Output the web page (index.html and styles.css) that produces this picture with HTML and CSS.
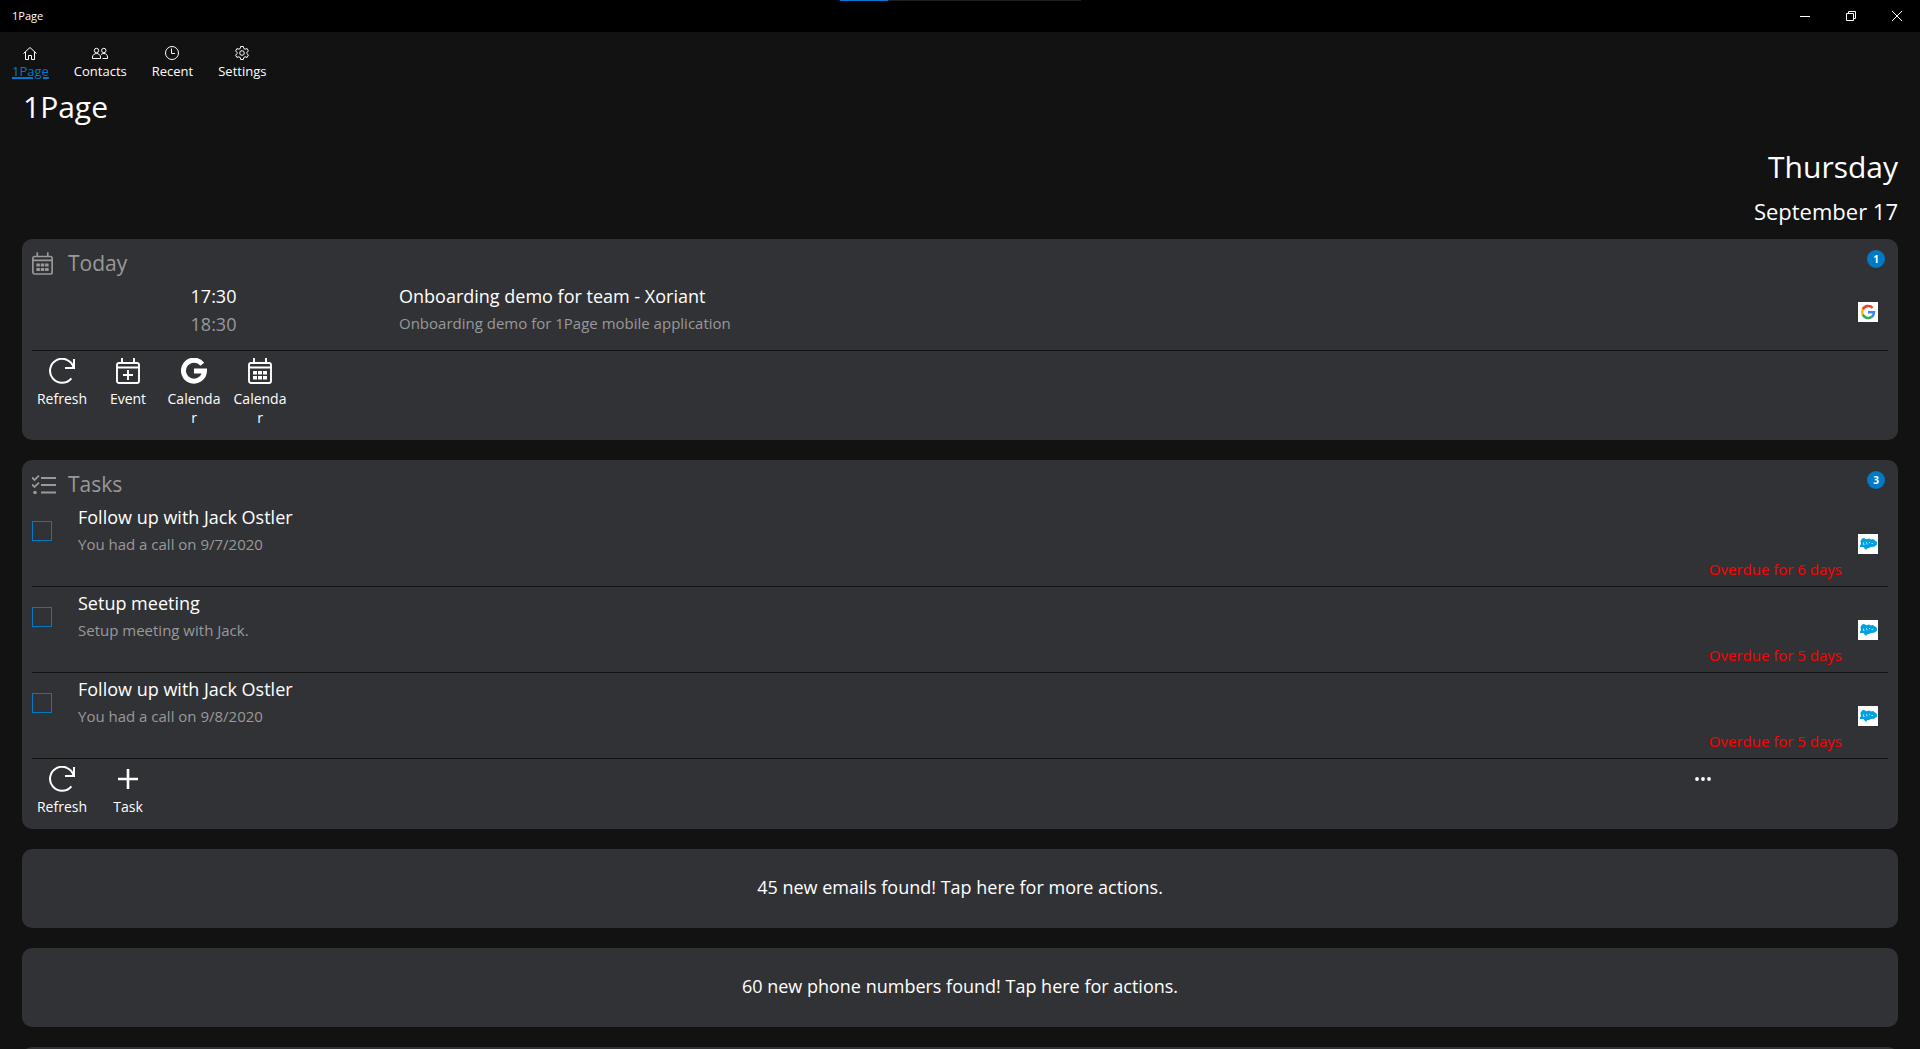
FILE: index.html
```html
<!DOCTYPE html>
<html lang="en">
<head>
<meta charset="utf-8">
<title>1Page</title>
<link rel="stylesheet" href="styles.css">
</head>
<body>
<svg class="defs" aria-hidden="true">
  <symbol id="refresh" viewBox="0 0 26 26"><path d="M22.4 20.3A12 12 0 1 1 24.6 9.6M25 1v9H16" fill="none" stroke="currentColor" stroke-width="2"/></symbol>
  <symbol id="calendar" viewBox="0 0 24 26"><path d="M3 5h18a2 2 0 0 1 2 2v16a2 2 0 0 1-2 2H3a2 2 0 0 1-2-2V7a2 2 0 0 1 2-2zM1 9.500h22M6 0v5M18 0v5" fill="none" stroke="currentColor" stroke-width="1.900"/><path d="M5 13h4v3.500H5zM10 13h4v3.500h-4zM15 13h4v3.500h-4zM5 18h4v3.500H5zM10 18h4v3.500h-4zM15 18h4v3.500h-4z" fill="currentColor"/></symbol>
  <symbol id="calendar-add" viewBox="0 0 24 26"><path d="M3 5h18a2 2 0 0 1 2 2v16a2 2 0 0 1-2 2H3a2 2 0 0 1-2-2V7a2 2 0 0 1 2-2zM1 9.500h22M6 0v5M18 0v5M12 12v10M7 17h10" fill="none" stroke="currentColor" stroke-width="1.900"/></symbol>
  <symbol id="google-mono" viewBox="0 0 26 26"><path d="M21.300 6.200A10.500 10.500 0 1 0 23.500 13H13" fill="none" stroke="currentColor" stroke-width="5"/></symbol>
  <symbol id="google" viewBox="0 0 20 20"><rect width="20" height="20" fill="#fff"/><g fill="none" stroke-width="2.600"><path d="M14.600 5.900A6 6 0 0 0 4.800 7.500" stroke="#ea4335"/><path d="M4.800 7.500a6 6 0 0 0 0 5.200" stroke="#fbbc05"/><path d="M4.800 12.700a6 6 0 0 0 9.500 1.700" stroke="#34a853"/><path d="M14 14.700a6 6 0 0 0 2-4.400H10" stroke="#4285f4"/></g></symbol>
  <symbol id="cloud" viewBox="0 0 20 20"><rect width="20" height="20" fill="#fff"/><path d="M2 11.500l1-1.500-.5-3L4 4.500 6 4l2.500 1.200L11 4.600l2 .8 2-.4 3.800 2.800.2 3-3 2-3 .2-2 1-2 .2L8.500 16 6.500 14.500l-1-1.500H2z" fill="#00a1e0"/><path d="M5.500 8.500v2h1M8 8.500l1 .5v1.500M11 8.500h1M13.500 9.500h1.500" stroke="#d9f1fb" stroke-width=".8" fill="none"/></symbol>
  <symbol id="tasks" viewBox="0 0 24 20"><path d="M9 3h15M9 10h15M9 17.500h15M0 2.500l2.500 2.500L7 .7M0 9.500L2.500 12 7 7.700" fill="none" stroke="currentColor" stroke-width="1.800"/><circle cx="3" cy="17.500" r="1.800" fill="currentColor"/></symbol>
  <symbol id="plus" viewBox="0 0 26 26"><path d="M13 3v20M3 13h20" stroke="currentColor" stroke-width="2.600"/></symbol>
  <symbol id="dots" viewBox="0 0 26 26"><g fill="currentColor"><circle cx="7" cy="13" r="1.900"/><circle cx="13" cy="13" r="1.900"/><circle cx="19" cy="13" r="1.900"/></g></symbol>
</svg>

<div class="app">
  <header class="titlebar">
    <span class="titlebar-name">1Page</span>
    <div class="progress"><div class="progress-value"></div></div>
    <div class="window-controls">
      <button type="button" aria-label="Minimize"><svg width="10" height="10" viewBox="0 0 10 10"><path d="M0 5.500h10"/></svg></button>
      <button type="button" aria-label="Restore"><svg width="10" height="10" viewBox="0 0 10 10"><path d="M.5 2.500h7v7h-7zM2.500 2.500v-2h7v7h-2"/></svg></button>
      <button type="button" aria-label="Close"><svg width="10" height="10" viewBox="0 0 10 10"><path d="M0 0l10 10M10 0L0 10"/></svg></button>
    </div>
  </header>

  <nav class="nav">
    <a href="#home" class="active"><svg viewBox="0 0 16 16"><path d="M1.500 8.500L8 2.500l6.500 6M3.500 7v7.500h3v-4h3v4h3V7"/></svg>1Page</a>
    <a href="#contacts"><svg viewBox="0 0 16 16"><circle cx="4.500" cy="5.500" r="2.200"/><circle cx="11.800" cy="5.500" r="2.200"/><path d="M.5 13.500V12c0-2 2-3.500 4-3.500s4 1.500 4 3.500v1.500zM9 9.500c1-.8 2-1 3-1 2 0 3.500 1.500 3.500 3.500v1.500h-5"/></svg>Contacts</a>
    <a href="#recent"><svg viewBox="0 0 16 16"><circle cx="8" cy="8" r="6.500"/><path d="M7.500 3.500v5H11"/></svg>Recent</a>
    <a href="#settings"><svg viewBox="0 0 16 16"><circle cx="8" cy="8" r="2.300"/><path d="M6.700 1.500h2.600l.5 2 1.300.7 2-.6 1.300 2.300L13 7.300v1.400l1.400 1.400-1.300 2.300-2-.6-1.300.7-.5 2H6.700l-.5-2-1.300-.7-2 .6-1.300-2.300L3 8.700V7.300L1.600 5.900l1.300-2.300 2 .6 1.300-.7z"/></svg>Settings</a>
  </nav>

  <main class="page">
    <h1>1Page</h1>
    <div class="date">
      <p class="weekday">Thursday</p>
      <p class="day">September 17</p>
    </div>

    <div class="cards">
      <section class="card">
        <div class="card-header">
          <svg class="header-icon" width="21" height="23"><use href="#calendar"/></svg>
          <h2>Today</h2>
          <span class="badge">1</span>
        </div>
        <article class="event">
          <div class="event-time"><time>17:30</time><time class="muted">18:30</time></div>
          <div class="event-text"><h3>Onboarding demo for team - Xoriant</h3><p>Onboarding demo for 1Page mobile application</p></div>
          <svg class="source" width="20" height="20"><use href="#google"/></svg>
        </article>
        <div class="toolbar">
          <button type="button"><svg><use href="#refresh"/></svg>Refresh</button>
          <button type="button"><svg><use href="#calendar-add"/></svg>Event</button>
          <button type="button"><svg><use href="#google-mono"/></svg>Calendar</button>
          <button type="button"><svg><use href="#calendar"/></svg>Calendar</button>
        </div>
      </section>

      <section class="card">
        <div class="card-header">
          <svg class="header-icon" width="24" height="20"><use href="#tasks"/></svg>
          <h2>Tasks</h2>
          <span class="badge">3</span>
        </div>
        <article class="task">
          <input type="checkbox" id="task-1">
          <div class="task-text"><h3><label for="task-1">Follow up with Jack Ostler</label></h3><p>You had a call on 9/7/2020</p></div>
          <span class="overdue">Overdue for 6 days</span>
          <svg class="source" width="20" height="20"><use href="#cloud"/></svg>
        </article>
        <article class="task">
          <input type="checkbox" id="task-2">
          <div class="task-text"><h3><label for="task-2">Setup meeting</label></h3><p>Setup meeting with Jack.</p></div>
          <span class="overdue">Overdue for 5 days</span>
          <svg class="source" width="20" height="20"><use href="#cloud"/></svg>
        </article>
        <article class="task">
          <input type="checkbox" id="task-3">
          <div class="task-text"><h3><label for="task-3">Follow up with Jack Ostler</label></h3><p>You had a call on 9/8/2020</p></div>
          <span class="overdue">Overdue for 5 days</span>
          <svg class="source" width="20" height="20"><use href="#cloud"/></svg>
        </article>
        <div class="toolbar">
          <button type="button"><svg><use href="#refresh"/></svg>Refresh</button>
          <button type="button"><svg><use href="#plus"/></svg>Task</button>
          <button type="button" class="more" aria-label="More"><svg><use href="#dots"/></svg></button>
        </div>
      </section>

      <button type="button" class="card notice">45 new emails found! Tap here for more actions.</button>
      <button type="button" class="card notice">60 new phone numbers found! Tap here for actions.</button>
      <div class="card notice"></div>
    </div>
  </main>
</div>
</body>
</html>
```
FILE: styles.css
```css
* {
  box-sizing: border-box;
}

body {
  margin: 0;
  background: #121212;
  color: #fff;
  font-family: "Open Sans", "Noto Sans", sans-serif;
  font-size: 15px;
}

h1, h2, h3, p {
  margin: 0;
  font-weight: 400;
}

button {
  border: 0;
  padding: 0;
  background: none;
  color: inherit;
  font: inherit;
  cursor: pointer;
}

.defs {
  display: none;
}

.app {
  display: flex;
  flex-direction: column;
  height: 100vh;
}

/* Window title bar */
.titlebar {
  display: grid;
  grid-template-columns: 1fr 241px 1fr;
  flex: none;
  height: 32px;
  background: #000;
}

.titlebar-name {
  padding-left: 12px;
  font-size: 11px;
  line-height: 32px;
}

.progress {
  height: 1px;
  background: #1f1f1f;
}

.progress-value {
  width: 20%;
  height: 1px;
  background: #0078d7;
}

.window-controls {
  display: flex;
  justify-content: flex-end;
}

.window-controls button {
  display: grid;
  place-items: center;
  width: 46px;
}

.window-controls svg {
  fill: none;
  stroke: #fff;
}

/* Navigation */
.nav {
  display: flex;
  flex: none;
  gap: 25px;
  padding: 13px 12px 8px;
}

.nav a {
  display: flex;
  flex-direction: column;
  align-items: center;
  gap: 2px;
  color: #fff;
  font-size: 13px;
  line-height: 16px;
  text-decoration: none;
}

.nav a.active {
  color: #007ac6;
  text-decoration: underline 2px #0078d7;
}

.nav svg {
  width: 16px;
  height: 16px;
  fill: none;
  stroke: #fff;
}

/* Page */
.page {
  flex: 1;
  min-height: 0;
  padding: 0 22px 20px;
  overflow-y: auto;
  scrollbar-width: none;
}

h1 {
  padding-left: 1px;
  font-size: 30px;
  line-height: 40px;
}

.date {
  display: flex;
  flex-direction: column;
  gap: 8px;
  padding: 20px 0 12px;
  text-align: right;
}

.weekday {
  font-size: 30px;
  line-height: 40px;
}

.day {
  font-size: 22px;
  line-height: 32px;
}

.cards {
  display: flex;
  flex-direction: column;
  gap: 20px;
}

.card {
  padding: 8px 10px 0;
  border-radius: 10px;
  background: #313236;
}

.card-header {
  display: grid;
  grid-template-columns: 36px 1fr 18px;
  align-items: center;
  height: 33px;
  padding-right: 3px;
  color: #999;
}

.card-header h2 {
  font-size: 21px;
  line-height: 33px;
}

.badge {
  align-self: start;
  height: 18px;
  margin-top: 3px;
  border-radius: 9px;
  background: #007ac6;
  color: #fff;
  font-size: 10px;
  font-weight: 700;
  line-height: 18px;
  text-align: center;
}

h3, .event-time time {
  font-size: 18px;
  line-height: 24px;
}

.event-text p, .task-text p {
  color: #999;
  line-height: 30px;
}

.event {
  display: grid;
  grid-template-columns: 363px 1fr 20px;
  gap: 4px;
  padding: 4px 10px 12px 0;
  border-bottom: 1px solid #121212;
}

.event-time {
  display: flex;
  flex-direction: column;
  align-items: center;
}

.event-time .muted {
  color: #999;
  line-height: 32px;
}

.event .source {
  margin-top: 18px;
}

.event {
  padding-bottom: 10px;
}

.task {
  display: grid;
  grid-template-columns: 20px 1fr auto 20px;
  column-gap: 16px;
  height: 86px;
  padding: 4px 10px 5px 0;
  border-bottom: 1px solid #121212;
}

.task input {
  appearance: none;
  width: 20px;
  height: 20px;
  margin: 16px 0 0;
  border: 1px solid #007ac6;
}

.task input:checked {
  background: #007ac6;
}

.task-text {
  padding-left: 10px;
}

.overdue {
  align-self: end;
  color: #f00;
  line-height: 24px;
}

.task .source {
  margin-top: 29px;
}

/* Card actions */
.toolbar {
  display: flex;
  align-items: flex-start;
  gap: 10px;
  padding: 7px 2px 13px;
}

.toolbar button {
  display: flex;
  flex-direction: column;
  align-items: center;
  gap: 5px;
  width: 56px;
  font-size: 14px;
  line-height: 19px;
  overflow-wrap: anywhere;
}

.toolbar svg {
  width: 26px;
  height: 26px;
}

.toolbar .more {
  margin-left: auto;
  margin-right: 155px;
}

.notice {
  flex: none;
  min-height: 79px;
  padding: 10px 10px 14px;
  font-size: 18px;
}
```
